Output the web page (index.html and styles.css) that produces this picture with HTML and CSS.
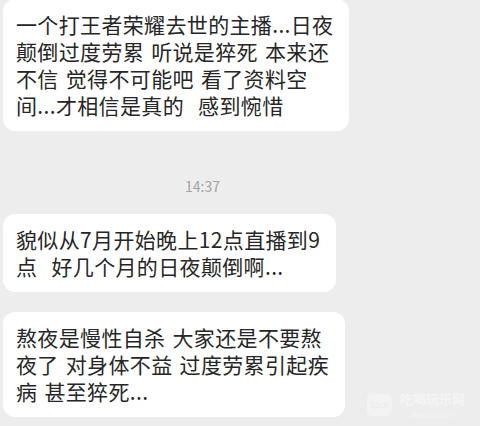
FILE: index.html
```html
<!DOCTYPE html>
<html lang="zh-CN">
<head>
<meta charset="utf-8">
<title>聊天记录</title>
<link rel="stylesheet" href="styles.css">
</head>
<body>
<main class="chat">
  <div class="bubble first">一个打王者荣耀去世的主播...日夜<br>颠倒过度劳累 听说是猝死 本来还<br>不信 觉得不可能吧 看了资料空<br>间...才相信是真的&nbsp; 感到惋惜</div>
  <div class="time">14:37</div>
  <div class="bubble">貌似从7月开始晚上12点直播到9<br>点&nbsp; 好几个月的日夜颠倒啊...</div>
  <div class="bubble">熬夜是慢性自杀 大家还是不要熬<br>夜了 对身体不益 过度劳累引起疾<br>病 甚至猝死...</div>
</main>
<div class="watermark">
  <div class="wm-logo">52ch</div>
  <div class="wm-text">
    <div class="wm-name">吃喝玩乐网</div>
    <div class="wm-url">WWW.52CH.NET</div>
  </div>
</div>
</body>
</html>
```
FILE: styles.css
```css
html, body {
  margin: 0;
  padding: 0;
  background: #ededed;
  width: 480px;
  height: 426px;
  overflow: hidden;
}
body {
  font-family: "Noto Sans CJK SC", "Noto Sans", sans-serif;
  color: #262626;
  position: relative;
}
.chat {
  display: flex;
  flex-direction: column;
  align-items: flex-start;
  padding-left: 3px;
}
.bubble {
  background: #ffffff;
  border-radius: 12px;
  font-size: 21px;
  line-height: 27px;
  padding: 12px 16px 12px 13px;
  white-space: nowrap;
  letter-spacing: 0.35px;
  word-spacing: 2px;
}
.bubble.first {
  margin-top: -1px;
}
.time {
  align-self: stretch;
  text-align: center;
  padding-right: 78px;
  font-size: 14px;
  line-height: 20px;
  color: #a3a3a3;
  margin: 45px 0 18px;
}
.bubble + .bubble {
  margin-top: 20px;
}
.watermark {
  position: absolute;
  left: 367px;
  top: 389px;
  display: flex;
  align-items: center;
  gap: 8px;
  color: #f5f5f5;
}
.wm-logo {
  width: 25px;
  height: 22px;
  border-radius: 5px;
  background: #f3f3f3;
  color: #ececec;
  font-size: 8px;
  line-height: 10px;
  font-weight: bold;
  display: flex;
  align-items: center;
  justify-content: center;
}
.wm-text {
  display: flex;
  flex-direction: column;
  align-items: center;
  gap: 3px;
}
.wm-name {
  font-size: 13px;
  line-height: 19px;
  font-weight: bold;
}
.wm-url {
  font-size: 6px;
  line-height: 9px;
}
```
